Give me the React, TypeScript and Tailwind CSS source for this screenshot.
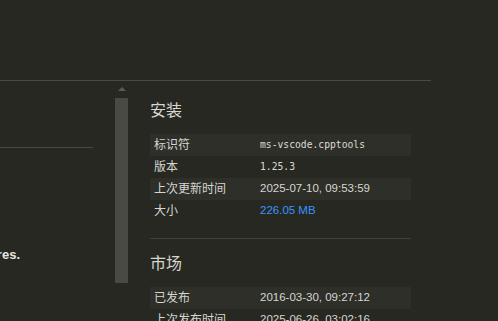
import React from "react";

// ─── Data ─────────────────────────────────────────────────────────────────────
type Row = { label: string; value: string; kind?: "mono" | "link" };

const INSTALL: Row[] = [
  { label: "标识符", value: "ms-vscode.cpptools", kind: "mono" },
  { label: "版本", value: "1.25.3", kind: "mono" },
  { label: "上次更新时间", value: "2025-07-10, 09:53:59" },
  { label: "大小", value: "226.05 MB", kind: "link" },
];

const MARKET: Row[] = [
  { label: "已发布", value: "2016-03-30, 09:27:12" },
  { label: "上次发布时间", value: "2025-06-26, 03:02:16" },
];

const SANS = "font-['Liberation_Sans','Noto_Sans_CJK_SC',sans-serif]";

function InfoTable({ rows }: { rows: Row[] }) {
  return (
    <div className="flex flex-col">
      {rows.map((r, i) => (
        <div
          key={r.label}
          className={`flex h-[22px] items-center ${i % 2 === 0 ? "bg-[#2e2f29]" : ""}`}
        >
          <div className="w-[110px] pl-[4px] text-[12px] text-[#d6d6d0]">{r.label}</div>
          <div
            className={
              r.kind === "mono"
                ? "font-['DejaVu_Sans_Mono',monospace] text-[9.7px] text-[#dcdcd6]"
                : r.kind === "link"
                ? "text-[11.5px] text-[#3794ff]"
                : "text-[11.5px] text-[#d6d6d0]"
            }
          >
            {r.value}
          </div>
        </div>
      ))}
    </div>
  );
}

export default function App() {
  return (
    <div className={`h-[321px] w-[498px] overflow-hidden bg-[#272822] ${SANS}`}>
      <div className="h-[80px]" />

      <div className="flex w-[431px] border-t border-[#4a4a42]">
        {/* left pane (cut off) */}
        <div className="w-[115px] overflow-hidden">
          <div className="mt-[66px] h-px w-[93px] bg-[#4a4a44]" />
          <div className="mt-[98px] flex w-[20px] justify-end whitespace-nowrap text-[13px] leading-[18px] font-semibold text-[#e6e6e0]">
            features.
          </div>
        </div>

        {/* scrollbar */}
        <div className="flex w-[13px] flex-col items-center">
          <div className="mt-[6px] h-0 w-0 border-x-[4px] border-b-[4px] border-x-transparent border-b-[#5a5a54]" />
          <div className="mt-[7px] h-[185px] w-[13px] bg-[#4a4a45]" />
        </div>

        {/* details */}
        <div className="ml-[22px] w-[261px] pt-[19px]">
          <div className="h-[22px] text-[16px] leading-[22px] text-[#d6d6d0]">安装</div>
          <div className="mt-[12px]">
            <InfoTable rows={INSTALL} />
          </div>

          <div className="mt-[16px] h-px bg-[#3e3f39]" />

          <div className="mt-[14px] h-[22px] text-[16px] leading-[22px] text-[#d6d6d0]">市场</div>
          <div className="mt-[12px]">
            <InfoTable rows={MARKET} />
          </div>
        </div>
      </div>
    </div>
  );
}
